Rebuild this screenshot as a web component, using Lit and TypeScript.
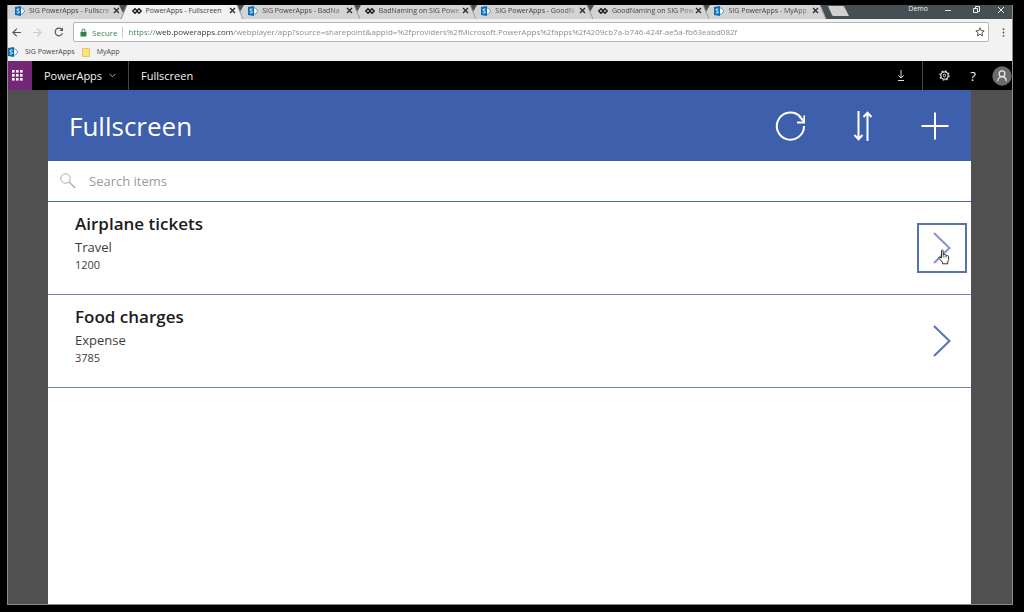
import { LitElement, html, svg, css, nothing } from "lit";
import { customElement, property, state } from "lit/decorators.js";
import { classMap } from "lit/directives/class-map.js";

const sharePointIcon = html`<svg class="favicon" width="10" height="10" viewBox="0 0 20 20" aria-hidden="true">
  <path d="M12 4h3l4.500 6-4.500 6h-3" fill="#fff" stroke="#4a94c9" stroke-width="1.800" />
  <path d="M0 2 12 0v20L0 18z" fill="#0b6db8" />
  <path d="M9 6.500C8 5.500 3.800 5.500 3.800 7.800c0 2.600 5 1.600 5 4.300 0 2.400-4 2.400-5.500 1.200" fill="none" stroke="#fff" stroke-width="2" />
</svg>`;

const powerAppsIcon = html`<svg class="favicon" width="10" height="10" viewBox="0 0 20 20" aria-hidden="true">
  <path d="M6 5.500 10.500 10 6 14.500 1.500 10zM14 5.500 18.500 10 14 14.500 9.500 10z" fill="none" stroke="#1c1c1c" stroke-width="2.800" />
</svg>`;

const closeIcon = html`<svg width="7" height="7" viewBox="0 0 7 7" aria-hidden="true">
  <path d="M1 1l5 5M6 1 1 6" stroke="#2a2a2a" stroke-width="1.300" />
</svg>`;

type Tab = { title: string; icon: "sp" | "pa" };

@customElement("browser-tab")
class BrowserTab extends LitElement {
  @property({ attribute: false }) tab!: Tab;
  @property({ type: Boolean, reflect: true }) active = false;
  @property({ type: Boolean }) beforeActive = false;
  @property({ type: Boolean }) last = false;

  static styles = css`
    :host {
      position: relative;
      flex: 1 1 0;
      min-width: 0;
      display: flex;
      align-items: flex-start;
      height: 14px;
      padding: 0 5px 0 7px;
      box-sizing: border-box;
      background: #d3d3d3;
      color: #444;
      font-size: 7px;
    }
    :host([active]) { background: #f2f2f2; }
    button {
      font: inherit;
      color: inherit;
      border: 0;
      background: none;
      padding: 0;
      display: flex;
      align-items: center;
      height: 11px;
    }
    .select { flex: 1; min-width: 0; gap: 4px; }
    .favicon { flex: none; }
    .title {
      flex: 1;
      min-width: 0;
      text-align: left;
      white-space: nowrap;
      line-height: 11px;
      mask-image: linear-gradient(to right, #000 80%, #0004);
    }
    :host([active]) .title { mask-image: none; }
    .close { flex: none; }
    .edge { position: absolute; right: -4px; top: 0; z-index: 1; }
  `;

  render() {
    const slant = this.beforeActive
      ? svg`<path d="M0 0h8L2 14H0z" fill="#d3d3d3"/><path d="M8 0h2v14H2z" fill="#f2f2f2"/><path d="M0 0h8L4 8z" fill="#465054"/><path d="M8 0 2 14" stroke="#8d9092" fill="none"/>`
      : this.last
        ? svg`<path d="M2 0h8v14H8z" fill="#465054"/><path d="M6 0H2l6 14h-2z" fill="#d3d3d3"/><path d="M2 0h8v14H8z" fill="#465054"/><path d="M2 0 8 14" stroke="#9c9fa0" fill="none"/>`
        : svg`<path d="M4 7 8 0h2v14H8z" fill="#d3d3d3"/><path d="M2 0h7L5 7z" fill="#465054"/><path d="M2 0 8 14" stroke="#9c9fa0" fill="none"/>`;
    return html`
      <button class="select" role="tab" aria-selected=${this.active ? "true" : "false"}>
        ${this.tab.icon === "sp" ? sharePointIcon : powerAppsIcon}
        <span class="title">${this.tab.title}</span>
      </button>
      <button class="close" aria-label="Close tab">${closeIcon}</button>
      <svg class="edge" width="10" height="14" viewBox="0 0 10 14" aria-hidden="true">${slant}</svg>
    `;
  }
}

@customElement("gallery-row")
class GalleryRow extends LitElement {
  @property() heading = "";
  @property() category = "";
  @property() amount = "";
  @property({ type: Boolean }) focused = false;

  static styles = css`
    :host {
      display: flex;
      align-items: center;
      justify-content: space-between;
      border-bottom: 1px solid #6f84ae;
      padding: 8px 4px 20px 27px;
      color: #3c3c3c;
    }
    h2 { margin: 0; font-size: 17px; line-height: 28px; font-weight: 600; color: #1c1c1c; }
    p { margin: 0; font-size: 13px; line-height: 18px; }
    p.amount { font-size: 11px; }
    button {
      position: relative;
      flex: none;
      display: flex;
      align-items: center;
      justify-content: center;
      width: 50px;
      height: 50px;
      margin-top: 12px;
      padding: 0;
      border: 2px solid transparent;
      background: none;
    }
    button.focused { border-color: #5673ae; }
    .focused .chevron { stroke: #8097cb; }
    .chevron { stroke: #5a70b4; fill: none; stroke-width: 2; }
    .pointer { position: absolute; left: 19px; top: 24px; }
  `;

  render() {
    return html`
      <div>
        <h2>${this.heading}</h2>
        <p>${this.category}</p>
        <p class="amount">${this.amount}</p>
      </div>
      <button class=${classMap({ focused: this.focused })} aria-label="Open ${this.heading}">
        <svg width="18" height="32" viewBox="0 0 18 32" aria-hidden="true"><path class="chevron" d="M1 1l15.500 15L1 31" /></svg>
        ${this.focused
          ? html`<svg class="pointer" width="12" height="16" viewBox="0 0 12 16" aria-hidden="true">
              <path d="M3.500 9V1.500Q4.300.2 5.200 1.500V6l.3-.5q1-.5 1.500.5 1-.7 1.700.5 1.300-.4 1.800.8.7 3.700-.8 5.500v2H4.500v-1.500L1 9.500Q.6 7.900 2 8.200z" fill="#fff" stroke="#333" />
              <path d="M5.200 6v2.500M7 6.500v2M8.700 7v1.500" stroke="#333" stroke-width=".7" />
            </svg>`
          : nothing}
      </button>
    `;
  }
}

@customElement("app-root")
class AppRoot extends LitElement {
  @state() private activeTab = 1;

  private tabs: Tab[] = [
    { title: "SIG PowerApps - Fullscre", icon: "sp" },
    { title: "PowerApps - Fullscreen", icon: "pa" },
    { title: "SIG PowerApps - BadNa", icon: "sp" },
    { title: "BadNaming on SIG Powe", icon: "pa" },
    { title: "SIG PowerApps - GoodN", icon: "sp" },
    { title: "GoodNaming on SIG Pow", icon: "pa" },
    { title: "SIG PowerApps - MyApp", icon: "sp" },
  ];

  private items = [
    { heading: "Airplane tickets", category: "Travel", amount: "1200" },
    { heading: "Food charges", category: "Expense", amount: "3785" },
  ];

  static styles = css`
    :host {
      display: flex;
      box-sizing: border-box;
      min-height: 100vh;
      padding: 5px 11px 7px 7px;
      background: #000;
      font-family: "Open Sans", "Noto Sans", sans-serif;
      font-size: 8px;
    }
    .window {
      flex: 1;
      min-width: 0;
      display: flex;
      flex-direction: column;
      border: solid #8a8a8a;
      border-width: 0 1px 1px;
    }
    button {
      font: inherit;
      color: inherit;
      border: 0;
      background: none;
      padding: 0;
      display: flex;
      align-items: center;
      justify-content: center;
    }
    a { color: inherit; text-decoration: none; }

    .strip { display: flex; background: #465054; height: 14px; font-size: 7px; }
    .tabs { flex: 0 1 816px; min-width: 0; display: flex; }
    .new-tab { flex: none; height: 14px; padding-left: 2px; }
    .system { margin-left: auto; display: flex; align-items: flex-start; color: #eee; }
    .system span { line-height: 8px; padding-right: 6px; }
    .system button { width: 28px; height: 10px; }
    .system button:last-child { width: 22px; }

    .toolbar {
      display: flex;
      align-items: center;
      background: #f2f2f2;
      padding: 3px 0 1px 4px;
    }
    .nav { display: flex; width: 61px; gap: 12px; }
    .address {
      flex: 1;
      min-width: 0;
      display: flex;
      align-items: center;
      height: 20px;
      box-sizing: border-box;
      border: 1px solid #b5b5b5;
      border-radius: 2px;
      background: #fff;
      padding: 0 3px 0 6px;
    }
    .secure { color: #3b8450; padding: 0 5px; border-right: 1px solid #ccc; line-height: 11px; margin-right: 5px; }
    .address input {
      flex: 1;
      min-width: 0;
      border: 0;
      padding: 0;
      outline: 0;
      font: inherit;
      line-height: 14px;
      background: linear-gradient(to right, #3b8450 27px, #333 27px, #333 105px, #858585 105px);
      background-clip: text;
      -webkit-background-clip: text;
      -webkit-text-fill-color: transparent;
    }
    .menu { width: 23px; padding-left: 5px; box-sizing: border-box; }

    .bookmarks {
      display: flex;
      align-items: center;
      height: 18px;
      gap: 7px;
      background: #f2f2f2;
      color: #444;
      font-size: 7px;
    }
    .bookmarks a { display: flex; align-items: center; gap: 7px; line-height: 12px; }

    .suite { display: flex; height: 29px; background: #000; color: #f3f3f3; font-size: 11px; }
    .launcher { width: 24px; background: #742774; padding-right: 6px; box-sizing: border-box; }
    .product { gap: 7px; padding: 0 12px; border-right: 1px solid #444; }
    .suite h1 { margin: 0; padding-left: 12px; font-size: 11px; line-height: 29px; font-weight: 400; }
    .actions { margin-left: auto; display: flex; }
    .actions .download { width: 44px; border-right: 1px solid #444; }
    .actions .gear { width: 42px; }
    .actions .help { width: 16px; font-size: 13px; }
    .actions .avatar { width: 31px; padding-left: 11px; }

    .stage { flex: 1; display: flex; background: #505050; padding: 0 41px 0 40px; }
    .app { flex: 1; min-width: 0; background: #fff; }
    header {
      display: flex;
      align-items: center;
      justify-content: space-between;
      height: 71px;
      padding: 0 22px 0 21px;
      background: #3e5fab;
      color: #fff;
    }
    header h2 { margin: 0; font-size: 26px; line-height: 36px; font-weight: 400; }
    .commands { display: flex; gap: 44px; }
    .commands svg { fill: none; stroke: #fff; stroke-width: 2; }
    .search {
      display: flex;
      align-items: center;
      gap: 12px;
      padding: 0 13px 0 12px;
      height: 40px;
      border-bottom: 1px solid #4f6ba3;
    }
    .search input {
      flex: 1;
      min-width: 0;
      border: 0;
      outline: 0;
      padding: 0;
      background: none;
      font: inherit;
      font-size: 13px;
      line-height: 20px;
      color: #333;
    }
    .search input::placeholder { color: #999; }
  `;

  render() {
    return html`
      <div class="window">
        <div class="strip">
          <div class="tabs" role="tablist">
            ${this.tabs.map(
              (tab, i) => html`<browser-tab
                .tab=${tab}
                ?active=${i === this.activeTab}
                .beforeActive=${i === this.activeTab - 1}
                .last=${i === this.tabs.length - 1}
                @click=${() => (this.activeTab = i)}
              ></browser-tab>`
            )}
          </div>
          <button class="new-tab" aria-label="New tab">
            <svg width="24" height="14" viewBox="0 0 24 14" aria-hidden="true"><path d="M2 1h15q1 0 1.400 1L23 11H7.500q-1 0-1.500-1z" fill="#d0d0d0" /></svg>
          </button>
          <div class="system">
            <span>Demo</span>
            <button aria-label="Minimize"><svg width="8" height="8" viewBox="0 0 8 8"><path d="M1 4.500h6" stroke="#eee" /></svg></button>
            <button aria-label="Restore"><svg width="8" height="8" viewBox="0 0 8 8" fill="none" stroke="#eee"><path d="M1.500 2.500h4v4h-4zM3.500 2V.500h4v5H6" /></svg></button>
            <button aria-label="Close"><svg width="8" height="8" viewBox="0 0 8 8"><path d="M1 1l6 6M7 1 1 7" stroke="#eee" /></svg></button>
          </div>
        </div>

        <div class="toolbar">
          <div class="nav">
            <button aria-label="Back"><svg width="9" height="9" viewBox="0 0 9 9" fill="none" stroke="#555" stroke-width="1.200"><path d="M9 4.500H1M4.800.7 1 4.500l3.800 3.800" /></svg></button>
            <button aria-label="Forward"><svg width="9" height="9" viewBox="0 0 9 9" fill="none" stroke="#ccc" stroke-width="1.200"><path d="M0 4.500h8M4.200.7 8 4.500 4.200 8.300" /></svg></button>
            <button aria-label="Reload"><svg width="10" height="10" viewBox="0 0 10 10" fill="none" stroke="#555" stroke-width="1.200"><path d="M8.500 6.300A3.800 3.800 0 1 1 8 2.700" /><path d="M9 .5v3.500H5.500z" fill="#555" stroke="none" /></svg></button>
          </div>
          <div class="address">
            <svg width="7" height="9" viewBox="0 0 7 9" aria-hidden="true"><path d="M.5 4h6v4.500h-6z" fill="#2f8046" /><path d="M2 4V2.500a1.500 1.500 0 0 1 3 0V4" fill="none" stroke="#2f8046" /></svg>
            <span class="secure">Secure</span>
            <input
              aria-label="Address"
              value="https://web.powerapps.com/webplayer/app?source=sharepoint&appId=%2fproviders%2fMicrosoft.PowerApps%2fapps%2f4209cb7a-b746-424f-ae5a-fb63eabd082f"
            />
            <button aria-label="Bookmark this page"><svg width="10" height="10" viewBox="0 0 10 10"><path d="M5 .8l1.200 2.800 3 .3-2.300 2 .7 3L5 7.300 2.400 8.900l.7-3-2.300-2 3-.3z" fill="none" stroke="#444" stroke-width=".9" /></svg></button>
          </div>
          <button class="menu" aria-label="Browser menu"><svg width="3" height="9" viewBox="0 0 3 9" fill="#555"><circle cx="1.500" cy="1.200" r=".9" /><circle cx="1.500" cy="4.500" r=".9" /><circle cx="1.500" cy="7.800" r=".9" /></svg></button>
        </div>

        <nav class="bookmarks" aria-label="Bookmarks">
          <a href="#sig">${sharePointIcon}SIG PowerApps</a>
          <a href="#myapp"><svg width="8" height="9" viewBox="0 0 8 9" aria-hidden="true"><path d="M.5.5h7v8h-7z" fill="#fbe08a" stroke="#e8c761" /></svg>MyApp</a>
        </nav>

        <div class="suite">
          <button class="launcher" aria-label="App launcher">
            <svg width="11" height="11" viewBox="0 0 11 11" fill="#fff">
              ${[0, 4, 8].map((y) => [0, 4, 8].map((x) => svg`<rect x=${x} y=${y} width="2.600" height="2.600" />`))}
            </svg>
          </button>
          <button class="product">
            PowerApps
            <svg width="7" height="5" viewBox="0 0 7 5" aria-hidden="true"><path d="M.5.800l3 3 3-3" fill="none" stroke="#bbb" stroke-width=".9" /></svg>
          </button>
          <h1>Fullscreen</h1>
          <div class="actions">
            <button class="download" aria-label="Download"><svg width="8" height="11" viewBox="0 0 8 11" fill="none" stroke="#ddd"><path d="M4 0v8M1.200 5.300 4 8l2.800-2.700M1 10.500h6" /></svg></button>
            <button class="gear" aria-label="Settings"><svg width="11" height="11" viewBox="0 0 11 11" fill="none" stroke="#ddd"><circle cx="5.500" cy="5.500" r="3.700" stroke-width="1.200" /><circle cx="5.500" cy="5.500" r="1.300" /><circle cx="5.500" cy="5.500" r="4.600" stroke-dasharray="1.800 1.810" stroke-width="1.200" /></svg></button>
            <button class="help" aria-label="Help">?</button>
            <button class="avatar" aria-label="Account"><svg width="20" height="20" viewBox="0 0 20 20" fill="none" stroke="#eee" stroke-width="1.200"><circle cx="10" cy="10" r="9.700" fill="#6b6b6b" stroke="none" /><circle cx="10" cy="7.800" r="2.900" /><path d="M5.800 15.200c0-6 8.400-6 8.400 0" /></svg></button>
          </div>
        </div>

        <main class="stage">
          <section class="app">
            <header>
              <h2>Fullscreen</h2>
              <div class="commands">
                <button aria-label="Refresh"><svg width="30" height="30" viewBox="0 0 30 30"><path d="M29 15A13.600 13.600 0 1 1 26 6.600" /><path d="M29.500 4.500v7h-7.500" stroke-width="2.200" /><path d="M24.500 5.500 29.500 11" /></svg></button>
                <button aria-label="Sort"><svg width="28" height="30" viewBox="0 0 28 30"><path d="M9.500 0v28M5.500 24l4 4.200 4-4.200M18.500 30V2M14.500 6l4-4.200 4 4.200" /></svg></button>
                <button aria-label="New item"><svg width="28" height="28" viewBox="0 0 28 28"><path d="M14 .5v27M.5 14h27" /></svg></button>
              </div>
            </header>
            <label class="search">
              <svg width="17" height="16" viewBox="0 0 17 16" fill="none" stroke="#aaa" aria-hidden="true"><circle cx="5.500" cy="5.500" r="4.700" /><path d="M9 9l6.300 6" stroke-width="1.300" /></svg>
              <input type="text" placeholder="Search items" aria-label="Search items" />
            </label>
            ${this.items.map(
              (item, i) => html`<gallery-row
                heading=${item.heading}
                category=${item.category}
                amount=${item.amount}
                .focused=${i === 0}
              ></gallery-row>`
            )}
          </section>
        </main>
      </div>
    `;
  }
}
